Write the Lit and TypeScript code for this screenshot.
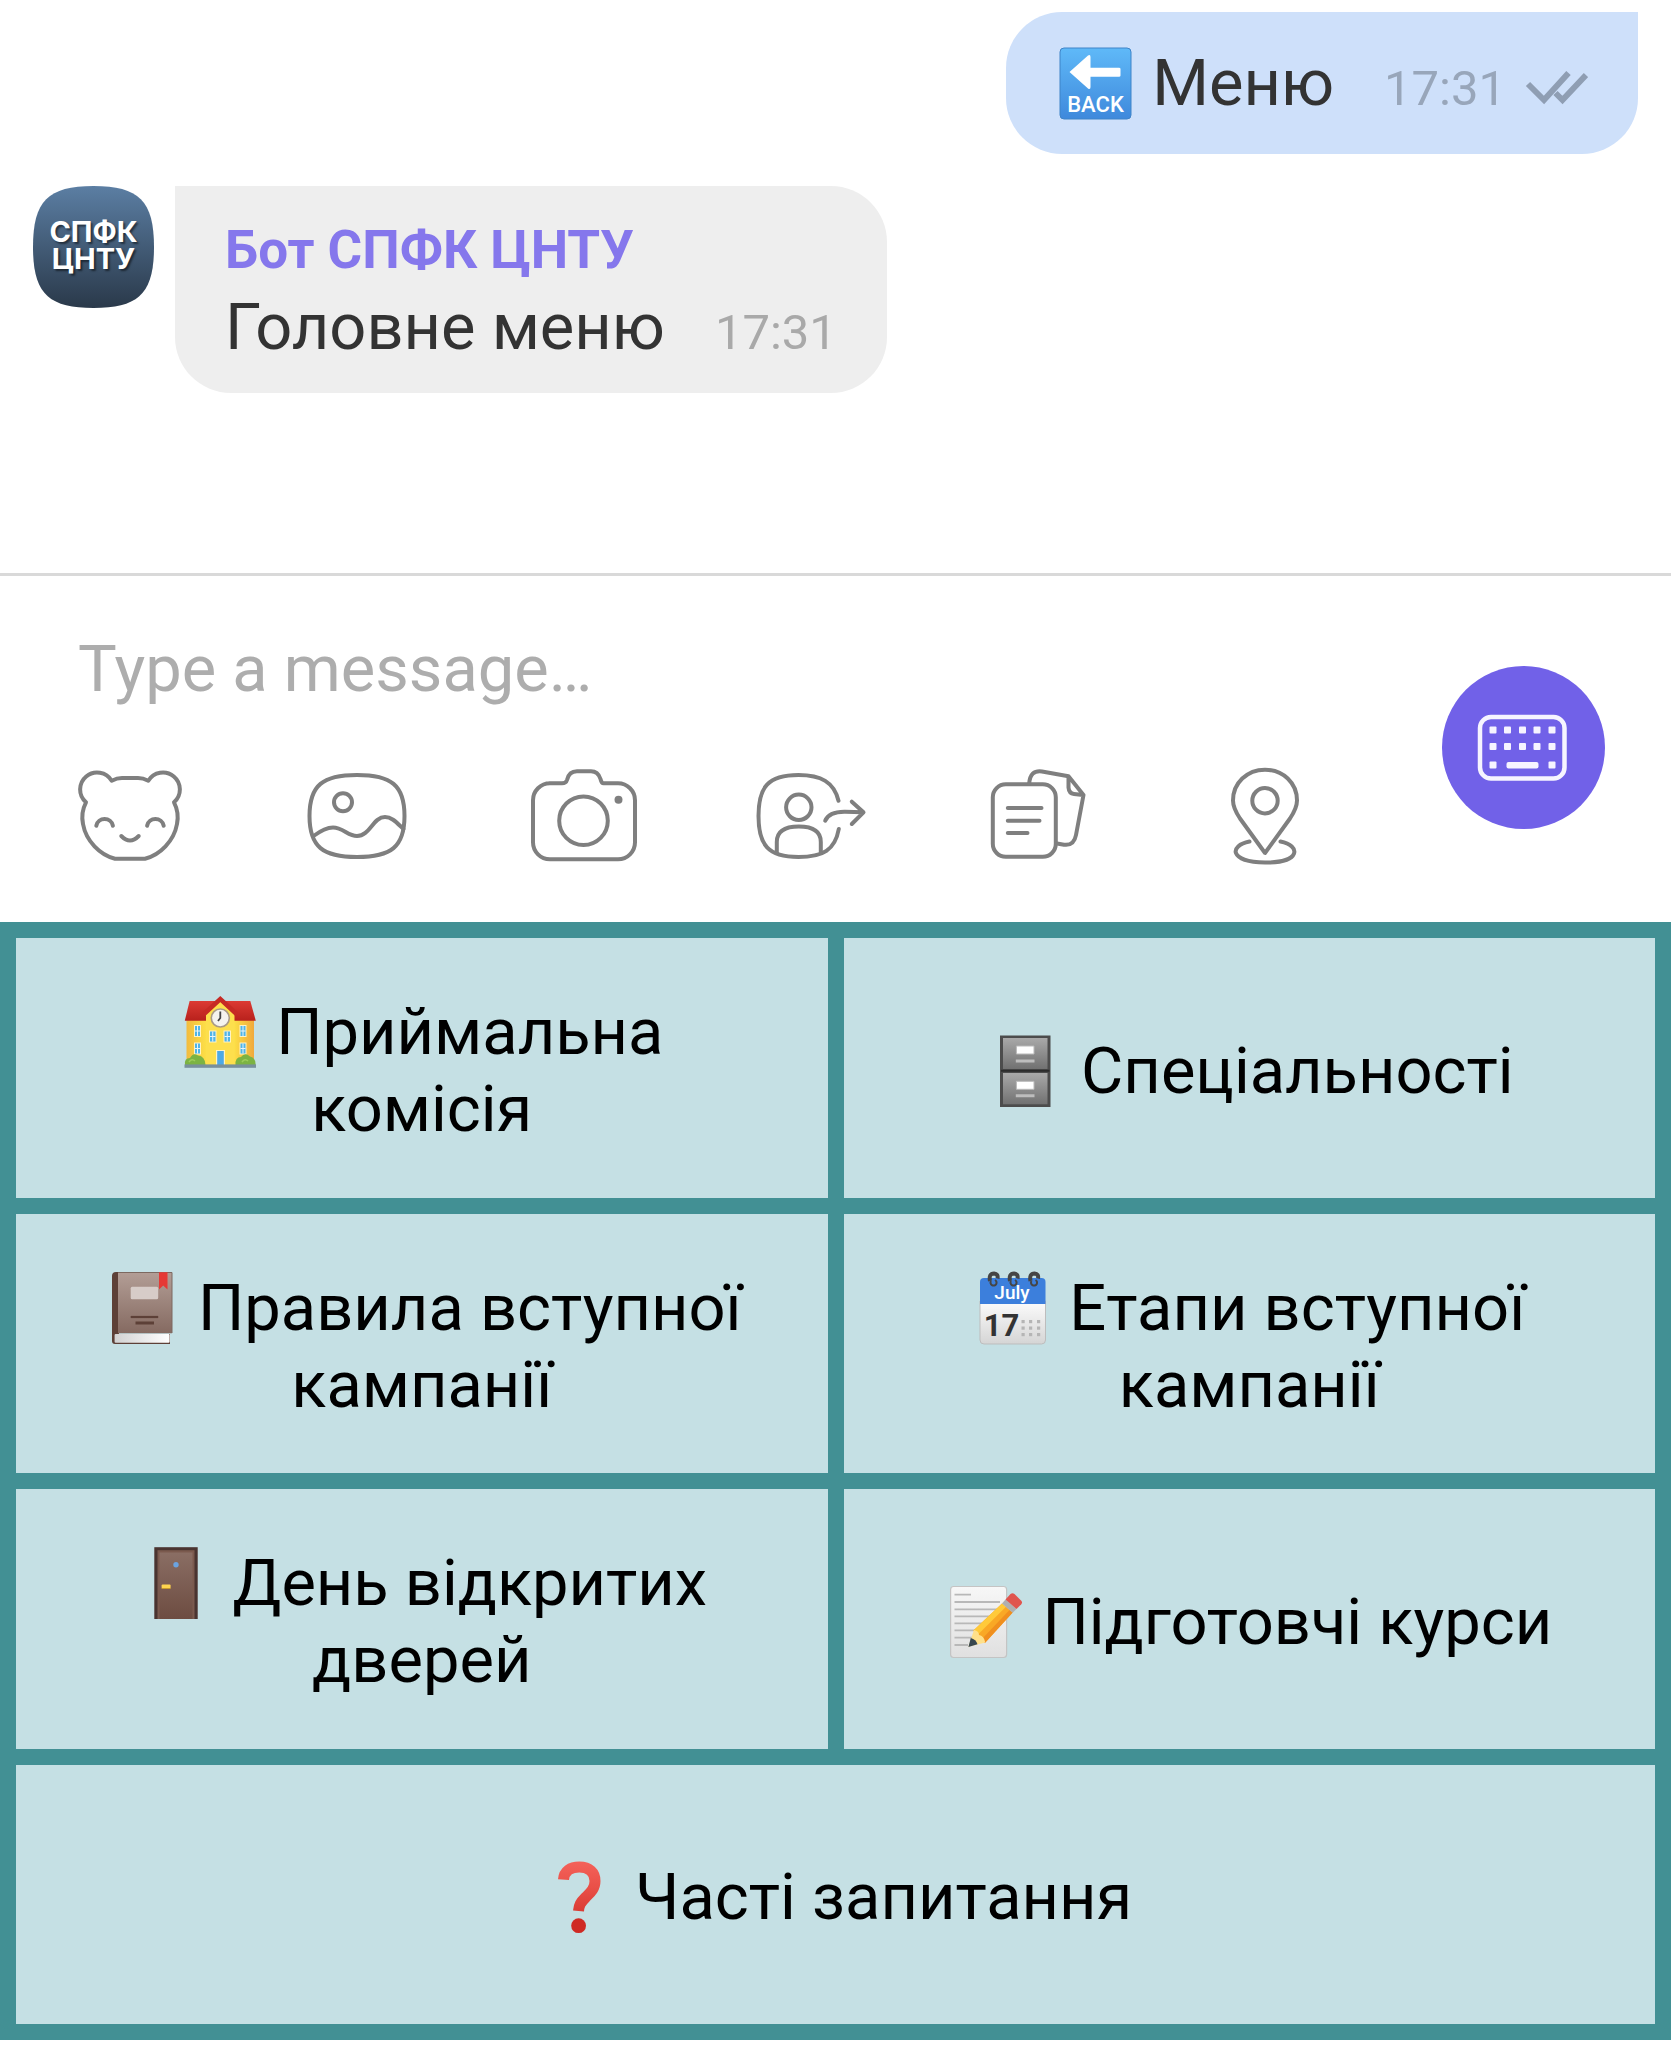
import { LitElement, css, html, svg } from "lit";
import { customElement, property } from "lit/decorators.js";

type EmojiName = "back" | "school" | "cabinet" | "book" | "calendar" | "door" | "memo" | "question";
type ToolName = "stickers" | "gallery" | "camera" | "contact" | "files" | "location";

const paneWindow = (x: number, y: number, w: number, h: number) => svg`
  <rect x=${x - 1} y=${y - 1} width=${w + 2} height=${h + 2} fill="#fff3c4"/>
  <rect x=${x} y=${y} width=${w} height=${h} fill="#4fb4e8"/>
  <path d="M${x + w / 2} ${y}v${h}M${x} ${y + h / 2}h${w}" stroke="#e8f4f8" stroke-width="1"/>`;

const emojiArt: Record<EmojiName, unknown> = {
  back: svg`
    <defs><linearGradient id="g" x2="0" y2="1"><stop stop-color="#5fb9f8"/><stop offset="1" stop-color="#3f89dc"/></linearGradient></defs>
    <rect x="4" y="5" width="71" height="71" rx="4" fill="url(#g)" stroke="#3f84c8" stroke-width="1"/>
    <path d="M13.500 29 32 12.500Q34.500 11 34.500 14V24.700H63Q64.500 24.700 64.500 26V32.500Q64.500 33.700 63 33.700H34.500V44Q34.500 47 32 45.500Z" fill="#fff"/>
    <text class="back-text" x="39.500" y="69" text-anchor="middle">BACK</text>`,
  school: svg`
    <defs>
      <linearGradient id="w"><stop stop-color="#f2bb3f"/><stop offset=".3" stop-color="#fde047"/><stop offset=".7" stop-color="#fde047"/><stop offset="1" stop-color="#f0a93c"/></linearGradient>
      <linearGradient id="r" x2="0" y2="1"><stop stop-color="#dc3a33"/><stop offset="1" stop-color="#b8211c"/></linearGradient>
    </defs>
    <rect x="6.500" y="27" width="67.500" height="46" fill="url(#w)"/>
    <path d="M9.600 9H70.300L75.800 28.700H4.800Z" fill="url(#r)"/>
    <path d="M26 21 40.300 9 54.500 21V73H26Z" fill="#fddf4d"/>
    <path d="M24 22 40.300 7 56.500 22" fill="none" stroke="#c62a24" stroke-width="4.500"/>
    <circle cx="40.300" cy="26" r="9" fill="#f5f3ee" stroke="#a99a86" stroke-width="1.600"/>
    <path d="M40.300 19.500V26L38 29" fill="none" stroke="#444" stroke-width="1.800"/>
    ${paneWindow(15, 34, 5, 10)}${paneWindow(60.5, 34, 5, 10)}
    ${paneWindow(15, 51.5, 5, 10)}${paneWindow(60.5, 51.5, 5, 10)}
    ${paneWindow(30, 39.5, 5.5, 10)}${paneWindow(44.5, 39.5, 5.5, 10)}
    <rect x="36" y="58" width="9" height="15" fill="#fff3c4"/>
    <rect x="37.200" y="59" width="6.600" height="14" fill="#4da9e6"/>
    <path d="M5 73Q4 66 10 66Q13 60 18 63.500Q25 64 25.500 73ZM55.500 73Q55 65 61 65Q65 60 70 64.500Q76 66 75.600 73Z" fill="#7cb342"/>
    <path d="M9 70q3-4 6-1m47 1q3-4 6-1" fill="none" stroke="#9ccc5a" stroke-width="1.500"/>
    <rect x="4.500" y="72.400" width="71.500" height="3.400" fill="#78909c"/>`,
  cabinet: svg`
    <defs><linearGradient id="c" x2="0" y2="1"><stop stop-color="#a9a9a9"/><stop offset="1" stop-color="#717171"/></linearGradient></defs>
    <rect x="15" y="4.500" width="50.500" height="71.500" fill="#4c4c4c"/>
    <rect x="18" y="7" width="44.500" height="31" fill="url(#c)"/>
    <rect x="18" y="42" width="44.500" height="31.300" fill="url(#c)"/>
    <path d="M16 39.700H64.500" stroke="#2b2b2b" stroke-width="2"/>
    <path d="M31.400 15H49V23H31.400ZM31.400 50.300H49V58.300H31.400Z" fill="#fff" stroke="#b9b9b9" stroke-width="1"/>
    <path d="M30.800 30H49.500M30.800 64.800H49.500" stroke="#bdbdbd" stroke-width="3"/>`,
  book: svg`
    <defs>
      <linearGradient id="b" x2="0" y2="1"><stop stop-color="#b39e96"/><stop offset="1" stop-color="#856a61"/></linearGradient>
      <linearGradient id="p"><stop stop-color="#d2d2d2"/><stop offset="1" stop-color="#fff"/></linearGradient>
    </defs>
    <path d="M14 4H17V66H68V76H13Q10 76 10 73V8Q10 4 14 4Z" fill="#5d4037"/>
    <rect x="12.600" y="66" width="55" height="8.800" rx="1" fill="url(#p)"/>
    <path d="M16 4H70V65.300H16Z" fill="url(#b)"/>
    <path d="M16 4.500H70V65" fill="none" stroke="#7d6960" stroke-width="1"/>
    <rect x="28.700" y="18.700" width="27.500" height="12.600" rx="1.500" fill="#d7ccc8"/>
    <path d="M57 4.300H65.500V21.500L61.200 17.500 57 21.500Z" fill="#e53935"/>
    <path d="M28.700 49H56.200" stroke="#5d4037" stroke-width="2.200"/>
    <path d="M33.500 55H52" stroke="#5d4037" stroke-width="3"/>`,
  calendar: svg`
    <defs><linearGradient id="k" x2="0" y2="1"><stop stop-color="#fcfcfc"/><stop offset="1" stop-color="#d5d5d5"/></linearGradient></defs>
    <path d="M7 33H72.500V72Q72.500 76 68.500 76H11Q7 76 7 72Z" fill="url(#k)" stroke="#bdbdbd" stroke-width="1"/>
    <path d="M7 36V14Q7 10 11 10H68.500Q72.500 10 72.500 14V36Z" fill="#3c7fdc"/>
    <g fill="none" stroke="#454545" stroke-width="4"><path d="M17 13Q15.500 5.500 21 5.500Q25.500 6 24.500 10.500M37 13Q35.500 5.500 41 5.500Q45.500 6 44.500 10.500M57.500 13Q56 5.500 61.500 5.500Q66 6 65 10.500"/></g>
    <path d="M18 13a3 3 0 1 0 4-1M38 13a3 3 0 1 0 4-1M58.500 13a3 3 0 1 0 4-1" fill="none" stroke="#454545" stroke-width="2"/>
    <text class="month" x="39" y="31" text-anchor="middle">July</text>
    <text class="day" x="28.500" y="68" text-anchor="middle">17</text>
    <g fill="#b5b5b5">${[50, 57.5, 65.5].map((x) => [53.5, 60, 66.5].map((y) => svg`<rect x=${x - 1.5} y=${y - 1.5} width="3.200" height="3.200"/>`))}</g>`,
  door: svg`
    <defs><linearGradient id="d" x2="0" y2="1"><stop stop-color="#8a6e64"/><stop offset="1" stop-color="#6d4c41"/></linearGradient></defs>
    <rect x="18.300" y="4.200" width="43.400" height="71.800" fill="#4a3430"/>
    <rect x="21.500" y="7.200" width="37" height="68.800" fill="#7b5a4e"/>
    <rect x="23.500" y="9.500" width="33" height="66.500" fill="url(#d)"/>
    <circle cx="40" cy="21.800" r="2.700" fill="#6ba3e0"/>
    <rect x="25.600" y="41.500" width="9" height="4" rx="1" fill="#ffd54f"/>
    <path d="M25.600 45.500h9" stroke="#c79a2e" stroke-width="1"/>`,
  memo: svg`
    <defs><linearGradient id="m" x2="0" y2="1"><stop stop-color="#f7f7f7"/><stop offset="1" stop-color="#e0e0e0"/></linearGradient></defs>
    <rect x="4.600" y="4.500" width="56" height="71" rx="3" fill="url(#m)" stroke="#c4c4c4" stroke-width="1.200"/>
    <path d="M8.500 12.700H25M8.500 20H54M8.500 27.400H52M8.500 34.400H44M8.500 41.400H38M8.500 48.400H30M8.500 55.700H27M8.500 63H22" stroke="#b8b8b8" stroke-width="1.800"/>
    <path d="M56 21.500 66.700 30.500 38.900 61 27.400 48.500Z" fill="#f9a825"/>
    <path d="M56 21.500 60 24.800 31.500 53 27.400 48.500Z" fill="#ffca3a"/>
    <path d="M63.500 28 66.700 30.500 38.900 61 35.500 57.500Z" fill="#f08f1e"/>
    <path d="M28 48Q33 49 33 53Q38 53.500 39.300 60.500L22.400 64.700Z" fill="#ffe08a"/>
    <path d="M24.800 56Q30 57.500 31.500 62.300L22.400 64.900Z" fill="#37474f"/>
    <path d="M56 21.500 59.500 17.500 70.500 27 66.700 30.800Z" fill="#b0b0b0"/>
    <path d="M59.500 17.500 64.500 12Q66.500 10.300 68.500 12L75 18.500Q77 20.500 75.300 22.300L70.500 27Z" fill="#e0554e"/>`,
  question: svg`
    <defs>
      <linearGradient id="q" gradientUnits="userSpaceOnUse" x1="0" y1="4" x2="0" y2="56"><stop stop-color="#f4625a"/><stop offset=".5" stop-color="#ea5048"/><stop offset="1" stop-color="#d93a33"/></linearGradient>
    </defs>
    <path d="M24.500 22.600C25 14 31.500 10 40.300 10C50.500 10 56 15.500 56 24C56 32 51 36 46.500 40.500C41.500 45.500 40 48 39.500 54" fill="none" stroke="url(#q)" stroke-width="11"/>
    <circle cx="39.600" cy="68.700" r="7.400" fill="#cf2a24"/>`,
};

const toolArt: Record<ToolName, unknown> = {
  stickers: svg`
    <path d="M12 37.300A17 17 0 1 1 37.700 15.700Q43 13 48 13H64Q69 13 74.300 15.700A17 17 0 1 1 100 37.300C104 45 104 54 103 59C100 76 86 90 71 93.700H41C26 90 12 76 9 59C8 54 8 45 12 37.300Z"/>
    <path d="M22.300 60.700A8.500 8.500 0 0 1 38.900 60.700M73.100 60.700A8.500 8.500 0 0 1 89.700 60.700M47.300 71Q56 80 64.700 71"/>`,
  gallery: svg`
    <path d="M56 10C90 10 103.500 20 103.500 51S90 92 56 92S8.500 82 8.500 51S22 10 56 10Z"/>
    <circle cx="42" cy="37.300" r="9"/>
    <path d="M12.500 71C20 65.500 26 62.500 32 62.500C42 62.500 47 71 56 71C69 71 72 52 84 52C91 52 96 58 102.500 64"/>`,
  camera: svg`
    <path d="M21 18.300H34Q38 18.300 39 15Q41 6.300 49 6.300H63Q70 6.300 72.500 14Q73.500 18.300 75.500 18.300H90A17 17 0 0 1 107 35.300V77.300A17 17 0 0 1 90 94.300H22A17 17 0 0 1 5 77.300V35.300A17 17 0 0 1 22 18.300"/>
    <circle cx="55.500" cy="55.700" r="24.300"/><circle class="dot" cx="90.500" cy="34.700" r="4"/>`,
  contact: svg`
    <path d="M83.500 35.700C79 17 66 10 43.500 10C13 10 3.500 22 3.500 51S13 92 43.500 92C68 92 80 85 83.800 64"/>
    <circle cx="43.800" cy="42.300" r="12.700"/>
    <path d="M21.800 88V77Q21.800 61.500 43.800 61.500T65.800 77V88M70.200 55.700Q74 46.500 90 46.700L108 47.300M96.800 36.700 108.500 47.300 96.800 59"/>`,
  files: svg`
    <rect x="10.800" y="19.300" width="63" height="72.500" rx="13"/>
    <path d="M25.800 43H59.500M25.800 55.700H57.500M25.800 68H45.500M47.200 18.500C48 9 52 5.500 60 6.500L86.500 11.300 101.500 30 94 70C92.500 78 88 80.500 82 79.700L75 78.500M86.500 12.300V22.500Q87 28.500 92 29L101 30"/>`,
  location: svg`
    <path d="M56 88 31 53.500C26 46 24 41 24 35.500C24 18 38 4.700 56 4.700S88 18 88 35.500C88 41 86 46 81 53.500Z"/>
    <circle cx="56" cy="35.700" r="12.700"/>
    <path d="M40.500 76.500C20 80.500 20 97 56 97.500S92 80.500 71.500 76.500"/>`,
};

@customElement("emoji-icon")
class EmojiIcon extends LitElement {
  @property() name: EmojiName = "back";

  static styles = css`
    :host { display: inline-block; width: 80px; height: 62px; vertical-align: baseline; }
    .art { display: block; width: 80px; height: 80px; }
    .back-text, .month, .day { font-family: Roboto, "Liberation Sans", sans-serif; }
    .back-text { font-size: 22px; font-weight: 500; fill: #fff; }
    .month { font-size: 19px; font-weight: 500; fill: #fff; }
    .day { font-size: 31px; font-weight: 700; fill: #333; }
  `;

  render() {
    return html`<svg class="art" viewBox="0 0 80 80" aria-hidden="true">${emojiArt[this.name]}</svg>`;
  }
}

@customElement("app-root")
class AppRoot extends LitElement {
  private tools: { name: ToolName; label: string }[] = [
    { name: "stickers", label: "Stickers" },
    { name: "gallery", label: "Gallery" },
    { name: "camera", label: "Camera" },
    { name: "contact", label: "Share contact" },
    { name: "files", label: "Files" },
    { name: "location", label: "Location" },
  ];

  private replies: { icon: EmojiName; label: string; wide?: boolean }[] = [
    { icon: "school", label: "Приймальна комісія" },
    { icon: "cabinet", label: "Спеціальності" },
    { icon: "book", label: "Правила вступної кампанії" },
    { icon: "calendar", label: "Етапи вступної кампанії" },
    { icon: "door", label: "День відкритих дверей" },
    { icon: "memo", label: "Підготовчі курси" },
    { icon: "question", label: "Часті запитання", wide: true },
  ];

  static styles = css`
    :host {
      display: flex;
      flex-direction: column;
      min-height: 100vh;
      box-sizing: border-box;
      padding-bottom: 8px;
      background: #fff;
      color: #333;
      font-family: Roboto, "Liberation Sans", sans-serif;
      font-size: 65px;
      line-height: 78px;
    }
    button, input { font: inherit; color: inherit; border: 0; margin: 0; padding: 0; background: none; }
    button { cursor: pointer; }
    .chat {
      display: flex;
      flex-direction: column;
      gap: 32px;
      padding: 12px 33px 180px;
      border-bottom: 3px solid #d9d9d9;
    }
    .bubble { border-radius: 56px; padding: 27px 50px; }
    .line { display: flex; align-items: baseline; gap: 50px; }
    .sent { align-self: flex-end; padding-block: 31px 32px; background: #cee0fa; border-top-right-radius: 0; }
    .sent .time { color: #98a6ba; }
    .received { display: flex; align-items: flex-start; gap: 21px; }
    .received .bubble { background: #eee; border-top-left-radius: 0; }
    .status { display: flex; align-items: baseline; gap: 18px; line-height: 48px; }
    .time { font-size: 49px; line-height: 48px; color: #a9a9a9; }
    .ticks { width: 64px; height: 34px; fill: none; stroke: #8f9eb3; stroke-width: 6px; }
    .avatar { width: 121px; height: 122px; flex: none; }
    .initials { font-family: Inter, sans-serif; font-size: 29px; font-weight: 700; fill: #fff; text-shadow: 2px 2px 2px rgba(0, 0, 0, 0.5); }
    .sender { font-size: 53px; font-weight: 700; line-height: 75px; color: #8577ec; }

    .composer { display: flex; align-items: center; padding: 0 66px 0 74px; gap: 121px; }
    .entry { flex: 1; min-width: 0; display: flex; flex-direction: column; gap: 57px; padding: 54px 0 53px; }
    .message { height: 78px; padding: 0 4px; outline: 0; }
    .message::placeholder { color: #adadad; opacity: 1; }
    .tools { display: flex; justify-content: space-between; }
    .tool { display: block; }
    .tool-art {
      display: block;
      width: 112px;
      height: 104px;
      fill: none;
      stroke: #7f7f7f;
      stroke-width: 4px;
      stroke-linecap: round;
      stroke-linejoin: round;
    }
    .dot { fill: #7f7f7f; stroke: none; }
    .toggle { flex: none; width: 163px; height: 163px; border-radius: 50%; background: #7161e8; margin-bottom: 4px; }
    .toggle-art { display: block; }

    .keyboard {
      flex: 1;
      display: grid;
      grid-template-columns: 1fr 1fr;
      grid-auto-rows: 1fr;
      gap: 16px;
      padding: 16px;
      background: #429094;
    }
    .reply { padding: 5px 60px 0; background: #c5e0e4; color: #000; line-height: 77px; }
    .wide { grid-column: 1 / -1; }
  `;

  render() {
    return html`
      <section class="chat">
        <div class="bubble sent line">
          <span><emoji-icon name="back"></emoji-icon> Меню</span>
          <span class="status">
            <time class="time">17:31</time>
            <svg class="ticks" viewBox="0 0 64 34" role="img" aria-label="Read">
              <path d="M4 13 20 29 44.500 2M31.500 22 38.500 29 62 4" />
            </svg>
          </span>
        </div>
        <div class="received">
          <svg class="avatar" viewBox="0 0 121 122" aria-hidden="true">
            <defs>
              <linearGradient id="sky" x2="0" y2="1">
                <stop stop-color="#5b7ea3" />
                <stop offset="1" stop-color="#2a394a" />
              </linearGradient>
            </defs>
            <path d="M60.500 0C106 0 121 15 121 61S106 122 60.500 122S0 107 0 61S15 0 60.500 0Z" fill="url(#sky)" />
            <text class="initials" text-anchor="middle"><tspan x="60.500" y="56">СПФК</tspan><tspan x="60.500" dy="27">ЦНТУ</tspan></text>
          </svg>
          <div class="bubble">
            <div class="sender">Бот СПФК ЦНТУ</div>
            <div class="line"><span>Головне меню</span><time class="time">17:31</time></div>
          </div>
        </div>
      </section>

      <section class="composer">
        <div class="entry">
          <input class="message" type="text" placeholder="Type a message…" aria-label="Type a message…" />
          <div class="tools">
            ${this.tools.map(
              (t) => html`<button class="tool" type="button" aria-label=${t.label}>
                <svg class="tool-art" viewBox="0 0 112 104" aria-hidden="true">${toolArt[t.name]}</svg>
              </button>`
            )}
          </div>
        </div>
        <button class="toggle" type="button" aria-label="Keyboard">
          <svg class="toggle-art" viewBox="0 0 163 163" aria-hidden="true" fill="#f6f4ff">
            <rect x="38" y="51" width="84.500" height="61.500" rx="11" fill="none" stroke="#f6f4ff" stroke-width="4.500" />
            ${[64, 80.5].map((y) =>
              [51, 65.5, 80.5, 95, 110].map((x) => svg`<rect x=${x - 3.5} y=${y - 3.5} width="7" height="7" rx="1"/>`)
            )}
            <rect x="47.500" y="95.500" width="7" height="7" rx="1" />
            <rect x="64.500" y="96" width="32" height="6.500" rx="2" />
            <rect x="106.500" y="95.500" width="7" height="7" rx="1" />
          </svg>
        </button>
      </section>

      <section class="keyboard">
        ${this.replies.map(
          (r) => html`<button class="reply ${r.wide ? "wide" : ""}" type="button"><emoji-icon name=${r.icon}></emoji-icon> ${r.label}</button>`
        )}
      </section>
    `;
  }
}
